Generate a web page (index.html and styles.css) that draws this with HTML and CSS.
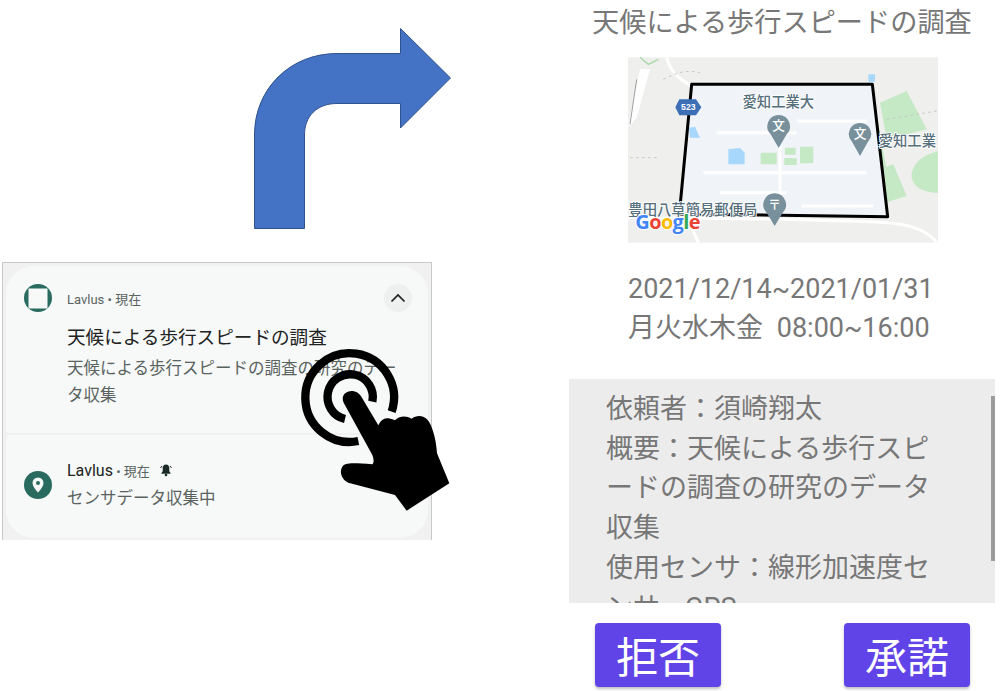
FILE: index.html
```html
<!DOCTYPE html>
<html lang="ja">
<head>
<meta charset="utf-8">
<title>天候による歩行スピードの調査</title>
<link rel="stylesheet" href="styles.css">
</head>
<body>
<main class="stage">
  <svg class="arrow" viewBox="254 28 198 202" aria-hidden="true">
    <path d="M254.5 228.5V135C254.5 89 290 53.5 337 53.5H400.5V28.500L450.500 78L400.500 128V103.500H337C317 103.500 304.500 116 304.500 135V228.500Z" fill="#4472c4" stroke="#2f528f" stroke-width="1"/>
  </svg>

  <section class="notifications">
    <article class="card card-top">
      <div class="head-row">
        <svg class="app-icon" viewBox="0 0 28 28" aria-hidden="true"><circle cx="14" cy="14" r="14" fill="#2a6b60"/><rect x="4.500" y="4.500" width="19" height="20" fill="#f6f9f8"/></svg>
        <span class="meta">Lavlus • 現在</span>
        <span class="chevron"><svg viewBox="0 0 28 28" aria-hidden="true"><path d="M7.500 17.500L14 11L20.500 17.500" fill="none" stroke="#1d1f1f" stroke-width="1.700"/></svg></span>
      </div>
      <h2 class="notice-title">天候による歩行スピードの調査</h2>
      <p class="notice-body">天候による歩行スピードの調査の研究のデー<br>タ収集</p>
    </article>
    <article class="card card-bottom">
      <svg class="app-icon" viewBox="0 0 28 28" aria-hidden="true"><circle cx="14" cy="14" r="14" fill="#2a6b60"/><path d="M14 6.500a5.500 5.500 0 0 0-5.500 5.500c0 4 5.500 9.500 5.500 9.500s5.500-5.500 5.500-9.500A5.500 5.500 0 0 0 14 6.500Z" fill="#f6f9f8"/><circle cx="14" cy="12" r="2" fill="#2a6b60"/></svg>
      <div class="bottom-text">
        <div class="bottom-head"><span class="app-name">Lavlus</span><span class="meta"> • 現在</span>
          <svg class="bell" viewBox="0 0 14 14" aria-hidden="true"><path d="M7 1.500c-2.200 0-3.300 1.700-3.300 3.700v3L2.500 10v.8h9V10l-1.200-1.800v-3C10.300 3.200 9.200 1.500 7 1.500Z" fill="#1d2b28"/><circle cx="7" cy="12" r="1.300" fill="#1d2b28"/><path d="M1.500 5L3 3M12.500 5L11 3" stroke="#1d2b28" stroke-width="1"/></svg>
        </div>
        <p class="bottom-body">センサデータ収集中</p>
      </div>
    </article>
  </section>

  <svg class="hand" viewBox="0 0 480 530" aria-hidden="true">
    <path d="M290 215A133 133 0 1 0 190 303" fill="none" stroke="#000" stroke-width="25"/>
    <path d="M232 185A68 68 0 1 0 150 237" fill="none" stroke="#000" stroke-width="25"/>
    <path d="M146 188C136 165 155 152 172 153C186 154 194 162 200 172L250 256C256 242 268 232 280 235C290 236 296 240 300 241C310 230 330 224 350 236C362 226 385 224 398 240C412 256 424 300 426 340L463 430L335 512L300 465L160 428C140 420 132 396 142 380C150 368 170 368 232 373C238 368 236 355 232 345Z" fill="#000"/>
  </svg>

  <section class="detail">
    <h1 class="detail-title">天候による歩行スピードの調査</h1>
    <svg class="map" viewBox="24 24 930 556" role="img" aria-label="愛知工業大周辺の地図">
      <rect x="24" y="24" width="930" height="556" fill="#efefed"/>
      <path d="M780 160L860 125L920 240L800 270ZM750 370L820 345L860 440L795 460ZM875 370C890 320 940 310 954 305V430C910 430 870 410 875 370ZM720 300C740 230 760 215 775 225L800 360C760 370 720 350 720 300Z" fill="#c5e8c5"/>
      <path d="M215 105H755L800 500H180Z" fill="#f0f3f7"/>
      <path d="M140 24C150 70 180 90 215 110M24 505C200 505 600 510 800 520C880 525 930 550 950 580M200 500L235 580M290 250H530M530 215H740M480 290V470M250 370H740M300 430H500M545 470H760" fill="none" stroke="#fff" stroke-width="9"/>
      <path d="M24 235L60 60H90L50 205Z" fill="#fff"/>
      <path d="M30 325H120M130 90C170 70 200 60 240 70M800 210L950 185" fill="none" stroke="#c8c8c4" stroke-width="3" stroke-dasharray="8 10"/>
      <path d="M60 24L85 45L115 30" fill="none" stroke="#a9d8a9" stroke-width="4"/>
      <path d="M30 225L50 90" stroke="#a0a0a0" stroke-width="3"/>
      <path d="M325 300L360 296L374 310V345H325ZM207 235L225 232L240 265H210ZM745 75H765V97H745Z" fill="#a7d8fb"/>
      <path d="M422 310H470V345H422ZM495 295H527V316H495ZM493 326H530V347H493ZM540 292H580V342H540Z" fill="#c5e8c5"/>
      <path d="M215 105H757L803 502L178 494Z" fill="none" stroke="#000" stroke-width="9" stroke-linejoin="round"/>
      <path d="M178 150H228L244 174L228 198H178L166 174Z" fill="#3d6fb6"/>
      <text class="road" x="205" y="183">523</text>
      <text class="label" x="475" y="173">愛知工業大</text>
      <text class="label label-end" x="948" y="290">愛知工業</text>
      <text class="label label-end" x="412" y="498">豊田八草簡易郵便局</text>
      <path d="M476 197a34 34 0 0 1 24 58L476 296L452 255a34 34 0 0 1 24-58ZM720 221a33 33 0 0 1 24 56L720 320L696 277a33 33 0 0 1 24-56ZM464 432a34 34 0 0 1 24 58L464 530L440 490a34 34 0 0 1 24-58Z" fill="#78909c"/>
      <text class="pin" x="476" y="243">文</text>
      <text class="pin" x="720" y="266">文</text>
      <text class="pin" x="464" y="478">〒</text>
      <text class="google" x="46" y="538"><tspan fill="#4285f4">G</tspan><tspan fill="#ea4335">o</tspan><tspan fill="#fbbc05">o</tspan><tspan fill="#4285f4">g</tspan><tspan fill="#34a853">l</tspan><tspan fill="#ea4335">e</tspan></text>
    </svg>
    <p class="period">2021/12/14~2021/01/31<br>月火水木金&ensp;08:00~16:00</p>
    <div class="scroll-box">
      <p class="scroll-text">依頼者：須崎翔太<br>概要：天候による歩行スピ<br>ードの調査の研究のデータ<br>収集<br>使用センサ：線形加速度セ<br>ンサ，GPS</p>
      <span class="scrollbar"></span>
    </div>
    <div class="actions">
      <button class="action" type="button">拒否</button>
      <button class="action" type="button">承諾</button>
    </div>
  </section>
</main>
</body>
</html>
```
FILE: styles.css
```css
* { box-sizing: border-box; }
html, body { margin: 0; padding: 0; background: #fff; }
body {
  font-family: Roboto, "Noto Sans CJK JP", sans-serif;
  overflow: hidden;
}
p, h1, h2 { margin: 0; font-weight: 400; }

.stage { position: relative; width: 1002px; height: 691px; overflow: hidden; }

/* Free-canvas pieces of the composed slide */
.arrow { position: absolute; left: 254px; top: 28px; width: 198px; height: 202px; }
.hand { position: absolute; left: 295px; top: 340px; width: 160px; height: 176.700px; }

.notifications {
  position: absolute; left: 2px; top: 262px; width: 430px; height: 278px;
  background: #f0f1f0;
  border: 1px solid #c9c9c9;
  border-bottom: 0;
  padding: 3px 3px 0;
  display: flex; flex-direction: column; gap: 2px;
}
.card { background: #f6f9f8; }
.card-top {
  height: 167px;
  border-radius: 28px 28px 4px 4px;
  padding: 18px 16px 0 18px;
}
.card-bottom {
  height: 103px;
  border-radius: 4px 4px 28px 28px;
  padding: 23px 18px 0;
  display: flex; align-items: flex-start; gap: 15px;
}
.head-row { display: flex; align-items: center; height: 28px; gap: 15px; }
.app-icon { width: 28px; height: 28px; flex: none; }
.card-bottom .app-icon { margin-top: 13px; }
.meta { font-size: 13px; color: #5b6361; }
.chevron {
  margin-left: auto; width: 28px; height: 28px; border-radius: 50%;
  background: #eef0ef; display: flex;
}
.chevron svg { width: 28px; height: 28px; }
.notice-title {
  margin: 12px 0 0 43px; font-size: 18.600px; line-height: 28px; color: #222;
}
.notice-body {
  margin: 3px 0 0 43px; font-size: 16.500px; line-height: 27px; color: #5b6361;
}
.bottom-text { display: flex; flex-direction: column; }
.bottom-head { display: flex; align-items: center; height: 24px; white-space: pre; }
.app-name { font-size: 16px; color: #222; }
.bell { width: 14px; height: 14px; margin-left: 9px; }
.bottom-body { font-size: 16.500px; line-height: 28px; color: #5b6361; margin-top: 3px; }

.detail { position: absolute; left: 569px; top: 0; width: 426px; height: 691px; display: flex; flex-direction: column; }
.detail-title {
  margin: 6px 0 0 23px; font-size: 27.200px; line-height: 34px; color: #777; white-space: nowrap;
}
.map { display: block; width: 310px; height: 186px; margin: 17px 0 0 59px; flex: none; }
.road { font: 600 26px "Liberation Sans", sans-serif; fill: #fff; text-anchor: middle; }
.label {
  font: 500 43px "Noto Sans CJK JP", sans-serif; fill: #566f7c; text-anchor: middle;
  stroke: #fff; stroke-width: 5px; paint-order: stroke;
}
.label-end { text-anchor: end; }
.pin { font: 500 38px "Noto Sans CJK JP", sans-serif; fill: #fff; text-anchor: middle; }
.google {
  font: 700 60px "Open Sans", sans-serif; letter-spacing: -2px;
  stroke: #fff; stroke-width: 6px; paint-order: stroke;
}
.period {
  margin: 27px 0 0 59px; font-size: 27px; line-height: 39px; color: #777; white-space: nowrap;
}
.scroll-box {
  position: relative; height: 224px; margin-top: 31px; background: #ececec;
  padding: 11px 0 0 37px; overflow: hidden; flex: none;
}
.scroll-text { font-size: 27px; line-height: 39.700px; color: #777; white-space: nowrap; }
.scrollbar { position: absolute; right: 0; top: 17px; width: 4px; height: 165px; background: #9b9b9b; }
.actions { display: flex; justify-content: space-between; margin: 20px 25px 0 26px; }
.action {
  width: 126px; height: 64px; border: 0; border-radius: 4px; background: #6144e8;
  color: #fff; font: 400 42px/64px "Noto Sans CJK JP", sans-serif; padding: 0;
  box-shadow: 0 2px 3px rgba(0, 0, 0, .25);
}
```
